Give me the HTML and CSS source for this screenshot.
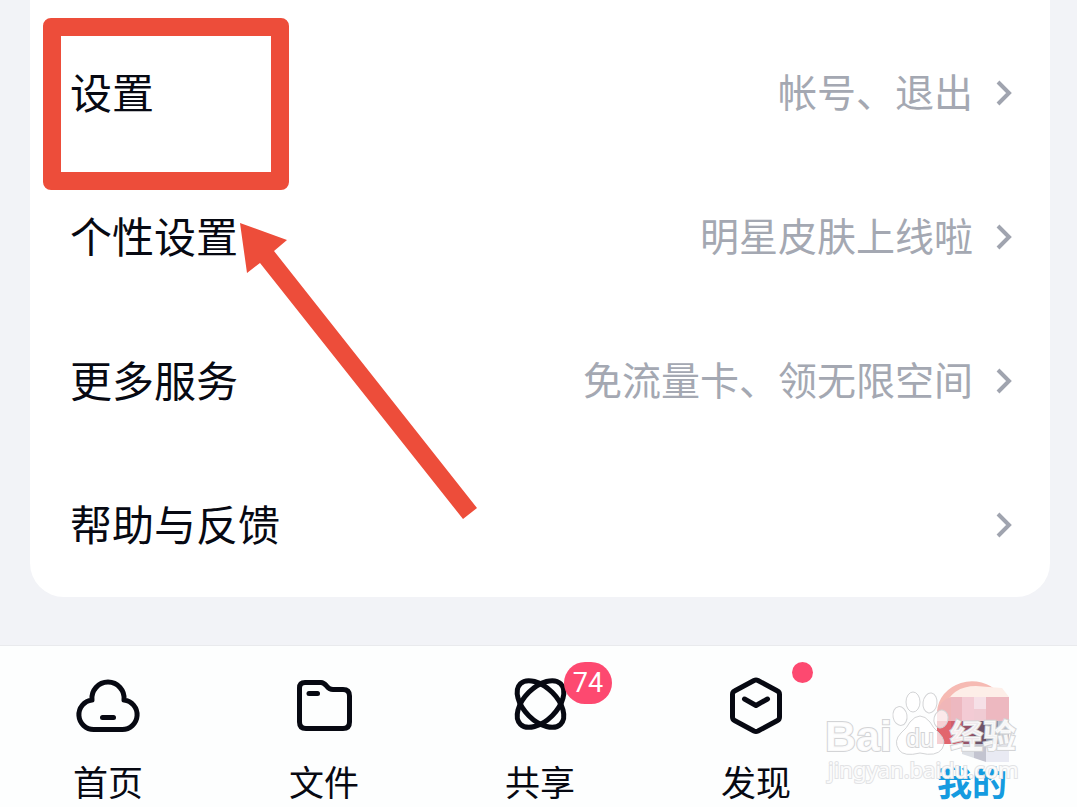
FILE: index.html
```
<!DOCTYPE html>
<html lang="zh-CN">
<head>
    <meta charset="UTF-8">
    <title>我的</title>
    <meta name="viewport" content="width=device-width, initial-scale=1">
    <link rel="stylesheet" href="styles.css">
</head>
<body>
<main class="content">
    <div class="card">
        <a class="row" href="#">
            <span class="label">设置</span>
            <span class="value">帐号、退出</span>
            <svg class="arrow" viewBox="0 0 16 26"><path d="M1 2l11 11L1 24"/></svg>
        </a>
        <a class="row" href="#">
            <span class="label">个性设置</span>
            <span class="value">明星皮肤上线啦</span>
            <svg class="arrow" viewBox="0 0 16 26"><path d="M1 2l11 11L1 24"/></svg>
        </a>
        <a class="row" href="#">
            <span class="label">更多服务</span>
            <span class="value">免流量卡、领无限空间</span>
            <svg class="arrow" viewBox="0 0 16 26"><path d="M1 2l11 11L1 24"/></svg>
        </a>
        <a class="row" href="#">
            <span class="label">帮助与反馈</span>
            <svg class="arrow" viewBox="0 0 16 26"><path d="M1 2l11 11L1 24"/></svg>
        </a>
    </div>
    <div class="mark-box"></div>
    <svg class="mark-arrow" viewBox="0 0 240 298"><path d="M1 1L48 18L35 29L238 286L224 297L21 41L8 51Z"/></svg>
</main>

<nav class="tabbar">
    <a class="tab" href="#">
        <svg class="icon" viewBox="0 0 72 72">
            <path d="M22 61.500H50A14.800 14.800 0 0 0 52 32A16.100 16.100 0 1 0 20 32A14.800 14.800 0 0 0 22 61.500Z"/>
            <path d="M30.500 49.500H41.500"/>
        </svg>
        <span>首页</span>
    </a>
    <a class="tab" href="#">
        <svg class="icon" viewBox="0 0 72 72">
            <path d="M17 14.500H33C36 14.500 37 16 39 18.500C41 21 42 21.500 45 21.500H55Q61.500 21.500 61.500 28V54Q61.500 60.500 55 60.500H18Q11.500 60.500 11.500 54V20Q11.500 14.500 17 14.500Z"/>
            <path d="M21 25.500H29.500"/>
        </svg>
        <span>文件</span>
    </a>
    <a class="tab" href="#">
        <svg class="icon" viewBox="0 0 72 72">
            <ellipse cx="36.500" cy="36" rx="28.500" ry="16.500" transform="rotate(45 36.500 36)"/>
            <ellipse cx="36.500" cy="36" rx="28.500" ry="16.500" transform="rotate(-45 36.500 36)"/>
        </svg>
        <span>共享</span>
        <b class="badge">74</b>
    </a>
    <a class="tab" href="#">
        <svg class="icon" viewBox="0 0 72 72">
            <path d="M34 12.500Q36 11.500 38 12.500L57.500 23Q59.500 24 59.500 26.500V49Q59.500 51.500 57.500 52.500L38 63Q36 64 34 63L14.500 52.500Q12.500 51.500 12.500 49V26.500Q12.500 24 14.500 23Z"/>
            <path d="M24.500 31L36 37.500L47.500 31"/>
        </svg>
        <span>发现</span>
        <i class="dot"></i>
    </a>
    <a class="tab active" href="#">
        <svg class="icon avatar" viewBox="0 0 72 72">
            <path fill="#f6bab3" d="M1 53V44A35 32 0 0 1 63 25L20 28L14 53Z"/>
            <path fill="#fdeee8" d="M8 40Q16 18 40 18L66 20L73 29H15Z"/>
            <path fill="#f0b6b8" d="M1 53V44Q4 32 15 29V53Z"/>
            <rect x="15" y="29" width="58" height="24" fill="#edb8c0"/>
            <rect x="26" y="29" width="12" height="24" fill="#f3cbd4"/>
            <rect x="38" y="29" width="12" height="12" fill="#f6e0e7"/>
            <rect x="38" y="41" width="12" height="12" fill="#f0cbd3"/>
            <rect x="1" y="53" width="14" height="23" fill="#e2666e"/>
            <rect x="15" y="53" width="11" height="23" fill="#cc5f6c"/>
            <rect x="26" y="53" width="12" height="23" fill="#955367"/>
            <rect x="38" y="53" width="12" height="23" fill="#6e5469"/>
            <rect x="50" y="53" width="12" height="23" fill="#8c97ad"/>
            <rect x="62" y="53" width="11" height="23" fill="#b5bfcc"/>
            <path fill="#dcdfe5" d="M26 76H38V90L26 86Z"/>
            <path fill="#c3c4d0" d="M38 76H50V94L38 90Z"/>
            <rect x="50" y="76" width="23" height="18" fill="#e9eaf3"/>
        </svg>
        <span>我的</span>
    </a>
    <!-- watermark -->
    <svg class="watermark" viewBox="0 0 204 100">
        <ellipse cx="80" cy="29" rx="7" ry="9.500" transform="rotate(-10 80 29)"/>
        <ellipse cx="93" cy="15" rx="7" ry="10"/>
        <ellipse cx="110" cy="16" rx="7" ry="10" transform="rotate(8 110 16)"/>
        <ellipse cx="121" cy="32" rx="7" ry="9" transform="rotate(14 121 32)"/>
        <path d="M90 35Q100 23 110 35Q113 41 119 46Q127 54 122 62Q116 70 100 66Q84 70 79 63Q73 54 81 46Q87 41 90 35Z"/>
        <text class="wm-big" x="5" y="64">Bai</text>
        <text class="wm-du" x="86" y="60">du</text>
        <text class="wm-cn" x="130" y="61">经验</text>
        <text class="wm-url" x="8" y="91">jingyan.baidu.com</text>
    </svg>
</nav>
</body>
</html>
```
FILE: styles.css
```
body {
    margin: 0;
    background-color: #f2f3f7;
    color: #070912;
    font-family: "Noto Sans CJK SC", sans-serif;
    overflow: hidden;
}
a {
    color: inherit;
    text-decoration: none;
}
.content {
    position: relative;
    padding: 0 27px 48px 30px;
}
.card {
    padding: 21px 37px 0 40px;
    border-radius: 0 0 34px 34px;
    background-color: #fff;
}
.row {
    display: flex;
    align-items: center;
    height: 144px;
}
.label {
    flex: 1;
    padding-bottom: 6px;
    font-size: 42px;
}
.value {
    padding-bottom: 6px;
    color: #a4a8b2;
    font-size: 39px;
}
.arrow {
    width: 16px;
    height: 26px;
    margin-left: 24px;
    fill: none;
    stroke: #a0a4af;
    stroke-width: 4;
    overflow: visible;
}
.mark-box {
    position: absolute;
    left: 43px;
    top: 18px;
    width: 210px;
    height: 136px;
    border: 18px solid #ed4d3a;
    border-radius: 8px;
}
.mark-arrow {
    position: absolute;
    left: 239px;
    top: 222px;
    width: 240px;
    height: 298px;
    fill: #ed4d3a;
}
.tabbar {
    position: relative;
    display: grid;
    grid-template-columns: repeat(5, 1fr);
    margin-right: -3px;
    padding-bottom: 16px;
    border-top: 1px solid #e9eaed;
    background-color: #fdfefe;
}
.tab {
    position: relative;
    display: flex;
    flex-direction: column;
    align-items: center;
    padding-top: 22px;
    font-size: 35px;
    line-height: 44px;
}
.icon {
    width: 72px;
    height: 72px;
    margin-bottom: 19px;
    fill: none;
    stroke: #070912;
    stroke-width: 5;
    stroke-linecap: round;
    stroke-linejoin: round;
    overflow: visible;
}
.avatar {
    stroke: none;
}
.active {
    color: #159be0;
    font-weight: bold;
}
.badge {
    position: absolute;
    left: 132px;
    top: 16px;
    width: 48px;
    border-radius: 21px;
    background-color: #fd4970;
    color: #fff;
    font-family: Roboto, sans-serif;
    font-size: 27px;
    font-weight: normal;
    line-height: 42px;
    text-align: center;
}
.dot {
    position: absolute;
    left: 144px;
    top: 16px;
    width: 21px;
    height: 21px;
    border-radius: 50%;
    background-color: #fd4970;
}
.watermark {
    position: absolute;
    right: 56px;
    top: 41px;
    width: 204px;
    height: 100px;
    overflow: visible;
    font-family: "Liberation Sans", "Noto Sans CJK SC", sans-serif;
    fill: #fff;
    fill-opacity: 0.7;
    stroke: #d3d4d6;
    stroke-width: 1;
}
.watermark text {
    fill-opacity: 0.9;
    stroke-width: 2;
    paint-order: stroke;
}
.wm-big {
    font-size: 43px;
    font-weight: bold;
}
.wm-du {
    font-size: 25px;
}
.wm-cn {
    font-size: 33px;
    font-weight: bold;
}
.wm-url {
    font-family: "Noto Sans", sans-serif;
    font-size: 22px;
    stroke: #e2e3e5;
}
```
